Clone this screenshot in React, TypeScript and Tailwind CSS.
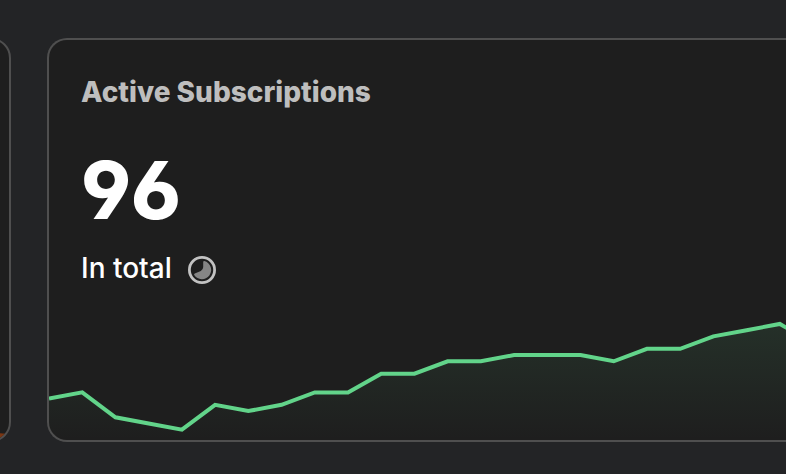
import type { ReactNode } from 'react'

interface Point {
  x: number
  y: number
}

const CHART_WIDTH = 737
const CHART_HEIGHT = 124
const STEP = 33.22
const UNIT = 6.22

// Subscriptions gained or lost relative to the lowest day
const history = [5, 6, 2, 1, 0, 4, 3, 4, 6, 6, 9, 9, 11, 11, 12, 12, 12, 11, 13, 13, 15, 16, 17, 14]

const points: Point[] = history.map((value, i) => ({
  x: i * STEP,
  y: CHART_HEIGHT - 10.3 - value * UNIT,
}))

export default function App() {
  return (
    <main className="flex min-h-screen gap-9 overflow-hidden bg-[#232426] pt-[38px] pb-8 font-['Inter',sans-serif]">
      <Card className="-ml-[53px] w-16 shrink-0 rounded-[20px] border-2">
        <svg viewBox="0 0 60 8" className="block h-2 w-full" aria-hidden="true">
          <path d="M0 0L36 0L60 2V8H0Z" fill="#7a3613" />
        </svg>
      </Card>
      <Card className="min-w-0 flex-1 rounded-l-[20px] border-2 border-r-0">
        <div className="flex flex-1 flex-col px-8 pt-9">
          <h2 className="text-[28px] leading-8 font-extrabold text-[#bebebe]">Active Subscriptions</h2>
          <p className="mt-10 text-[80px] leading-[84px] font-extrabold text-white [font-feature-settings:'cv03','cv04']">
            96
          </p>
          <div className="mt-5 flex items-center gap-4">
            <span className="text-[28px] leading-8 font-medium text-white">In total</span>
            <PieIcon />
          </div>
        </div>
        <Sparkline />
      </Card>
    </main>
  )
}

function Card({ className, children }: { className: string; children: ReactNode }) {
  return (
    <section className={`flex h-[404px] flex-col justify-end overflow-hidden border-[#4f4f4f] bg-[#1e1e1e] ${className}`}>
      {children}
    </section>
  )
}

function PieIcon() {
  return (
    <svg viewBox="0 0 28 28" className="mt-1 size-7" aria-hidden="true">
      <circle cx="14" cy="14" r="12.6" fill="none" stroke="#c2c2c2" strokeWidth="2.8" />
      <path
        d="M15.2 5.9Q15.3 4.9 16.4 5.1A9.2 9.2 0 1 1 6.2 18.9Q5.8 17.8 6.8 17.4L12.8 15Q15.2 13.7 15.2 11Z"
        fill="#858585"
      />
    </svg>
  )
}

function Sparkline() {
  const line = points.map(p => `${p.x},${p.y}`).join(' ')
  const last = points[points.length - 1]

  return (
    <svg
      viewBox={`0 0 ${CHART_WIDTH} ${CHART_HEIGHT}`}
      preserveAspectRatio="none"
      className="block h-[124px] w-full shrink-0"
      role="img"
      aria-label="Active subscriptions over time"
    >
      <defs>
        <linearGradient id="area" x1="0" y1="0" x2="0" y2="1">
          <stop offset="0" stopColor="#62d48a" stopOpacity="0.1" />
          <stop offset="1" stopColor="#62d48a" stopOpacity="0" />
        </linearGradient>
      </defs>
      <polygon points={`0,${CHART_HEIGHT} ${line} ${last.x},${CHART_HEIGHT}`} fill="url(#area)" />
      <polyline points={line} fill="none" stroke="#62d48a" strokeWidth="4" vectorEffect="non-scaling-stroke" />
    </svg>
  )
}
